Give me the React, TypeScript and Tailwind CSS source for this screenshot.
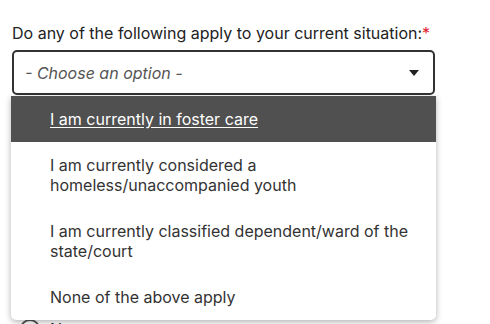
import React from "react";

const options = [
  "I am currently in foster care",
  "I am currently considered a homeless/unaccompanied youth",
  "I am currently classified dependent/ward of the state/court",
  "None of the above apply",
];

export default function App() {
  return (
    <div
      className="w-[490px] h-[324px] overflow-hidden bg-white relative"
      style={{ fontFamily: "Inter, 'Noto Sans', sans-serif" }}
    >
      <div className="pt-[23px] pl-[12px] w-[435px]">
        <div className="text-[16px] leading-[20px] text-[#222222]">
          Do any of the following apply to your current situation:
          <span className="text-[#e0182d]">*</span>
        </div>
        <div className="relative mt-[7px]">
          <div className="h-[45px] border-2 border-[#333333] rounded-[5px] flex items-center justify-between pl-[11px] pr-[14px]">
            <span className="italic text-[16px] text-[#555555]">- Choose an option -</span>
            <svg width="10" height="6" viewBox="0 0 10 6">
              <path d="M0 0 H10 L5 6 Z" fill="#222222" />
            </svg>
          </div>
          <div className="mt-[192px] flex flex-col gap-[12px] pl-[8px]">
            <label className="flex items-center gap-[10px] text-[16px] leading-[20px] text-[#222222]">
              <span className="w-[20px] h-[20px] rounded-full border-2 border-[#555555]"></span>
              Yes
            </label>
            <label className="flex items-center gap-[10px] text-[16px] leading-[20px] text-[#222222]">
              <span className="w-[20px] h-[20px] rounded-full border-2 border-[#555555]"></span>
              No
            </label>
          </div>
          <ul className="absolute left-[-1px] top-[46px] w-[425px] bg-white rounded-b-[5px] shadow-[0_2px_6px_rgba(0,0,0,0.3)] overflow-hidden">
            {options.map((o, i) => (
              <li
                key={o}
                className={
                  i === 0
                    ? "bg-[#505050] text-white underline underline-offset-2 text-[16px] leading-[20px] py-[13px] pl-[39px] pr-[16px]"
                    : "text-[#333333] text-[16px] leading-[20px] py-[13px] pl-[39px] pr-[16px]"
                }
              >
                {o}
              </li>
            ))}
          </ul>
        </div>
      </div>
    </div>
  );
}
